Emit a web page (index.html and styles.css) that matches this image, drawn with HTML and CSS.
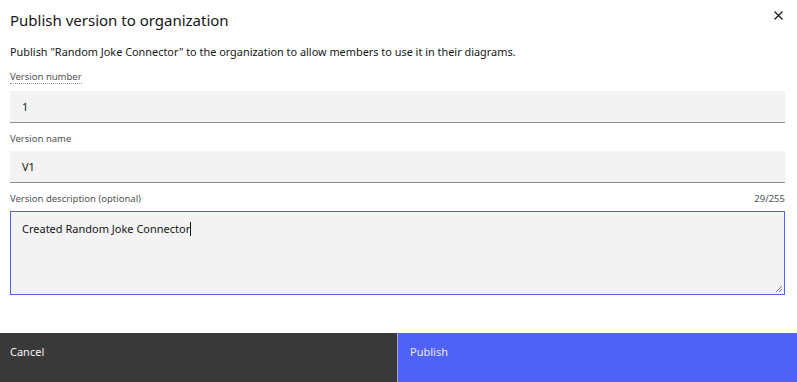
FILE: index.html
```html
<!DOCTYPE html>
<html>
<head>
<meta charset="utf-8">
<link rel="stylesheet" href="styles.css">
</head>
<body>
<div class="modal">
  <div class="header">
    <h2 class="title">Publish version to organization</h2>
    <button class="close" aria-label="Close">
      <svg width="9" height="9" viewBox="0 0 9 9"><path d="M0.5 0.5L8.5 8.5M8.5 0.5L0.5 8.5" stroke="#161616" stroke-width="1.2" fill="none"/></svg>
    </button>
  </div>
  <div class="body">
    <p class="desc">Publish "Random Joke Connector" to the organization to allow members to use it in their diagrams.</p>
    <div class="field first">
      <label class="label dotted">Version number</label>
      <div class="input">1</div>
    </div>
    <div class="field">
      <label class="label">Version name</label>
      <div class="input">V1</div>
    </div>
    <div class="field">
      <div class="label-row">
        <label class="label">Version description (optional)</label>
        <span class="counter">29/255</span>
      </div>
      <div class="textarea"><span>Created Random Joke Connector</span><span class="caret"></span>
        <svg class="grip" width="8" height="8" viewBox="0 0 8 8"><path d="M7 1L1 7M7 4L4 7" stroke="#777" stroke-width="1" fill="none"/></svg>
      </div>
    </div>
  </div>
  <div class="footer">
    <button class="btn cancel">Cancel</button>
    <button class="btn publish">Publish</button>
  </div>
</div>
</body>
</html>
```
FILE: styles.css
```css
* { box-sizing: border-box; }
html, body { margin: 0; padding: 0; background: #fff; }
body {
  font-family: "Noto Sans", "Liberation Sans", sans-serif;
  color: #161616;
  width: 797px;
  height: 382px;
  overflow: hidden;
}
.modal {
  display: flex;
  flex-direction: column;
  height: 382px;
}
.header {
  display: flex;
  justify-content: space-between;
  align-items: flex-start;
  padding: 9px 14px 0 10px;
}
.title {
  margin: 0;
  font-size: 15px;
  font-weight: 400;
  line-height: 22px;
}
.close {
  border: 0;
  background: none;
  padding: 0;
  margin-top: 2px;
  width: 9px;
  height: 9px;
  display: flex;
}
.body {
  padding: 0 12px 0 10px;
  flex: 1;
}
.desc {
  margin: 13px 0 0;
  font-size: 10.9px;
  line-height: 16px;
}
.field { margin-top: 9px; }
.field.first { margin-top: 11px; }
.label {
  display: block;
  width: fit-content;
  font-size: 9.5px;
  color: #525252;
  line-height: 13px;
  margin-bottom: 6px;
}
.dotted {
  border-bottom: 1px dotted #8d8d8d;
  line-height: 12px;
  margin-bottom: 7px;
}
.label-row {
  display: flex;
  justify-content: space-between;
  align-items: baseline;
}
.counter { font-size: 9.5px; color: #525252; }
.input {
  background: #f3f3f3;
  border-bottom: 1px solid #8d8d8d;
  height: 32px;
  padding: 0 12px;
  display: flex;
  align-items: center;
  font-size: 11px;
}
.textarea {
  position: relative;
  background: #f3f3f3;
  border: 1px solid #5062f5;
  height: 84px;
  padding: 9px 11px;
  font-size: 11px;
  line-height: 16px;
}
.caret {
  display: inline-block;
  width: 1px;
  height: 14px;
  background: #161616;
  vertical-align: -3px;
}
.grip { position: absolute; right: 1px; bottom: 1px; }
.footer {
  display: flex;
  height: 49px;
}
.btn {
  flex: 1;
  border: 0;
  font-family: inherit;
  font-size: 11px;
  text-align: left;
  padding: 11px 10px 0;
  display: flex;
  align-items: flex-start;
}
.cancel { background: #393939; color: #f4f4f4; }
.publish {
  background: #5062f5;
  color: #e6e9ff;
  border-left: 1px solid #a8a8a8;
  padding-left: 12px;
}
```
